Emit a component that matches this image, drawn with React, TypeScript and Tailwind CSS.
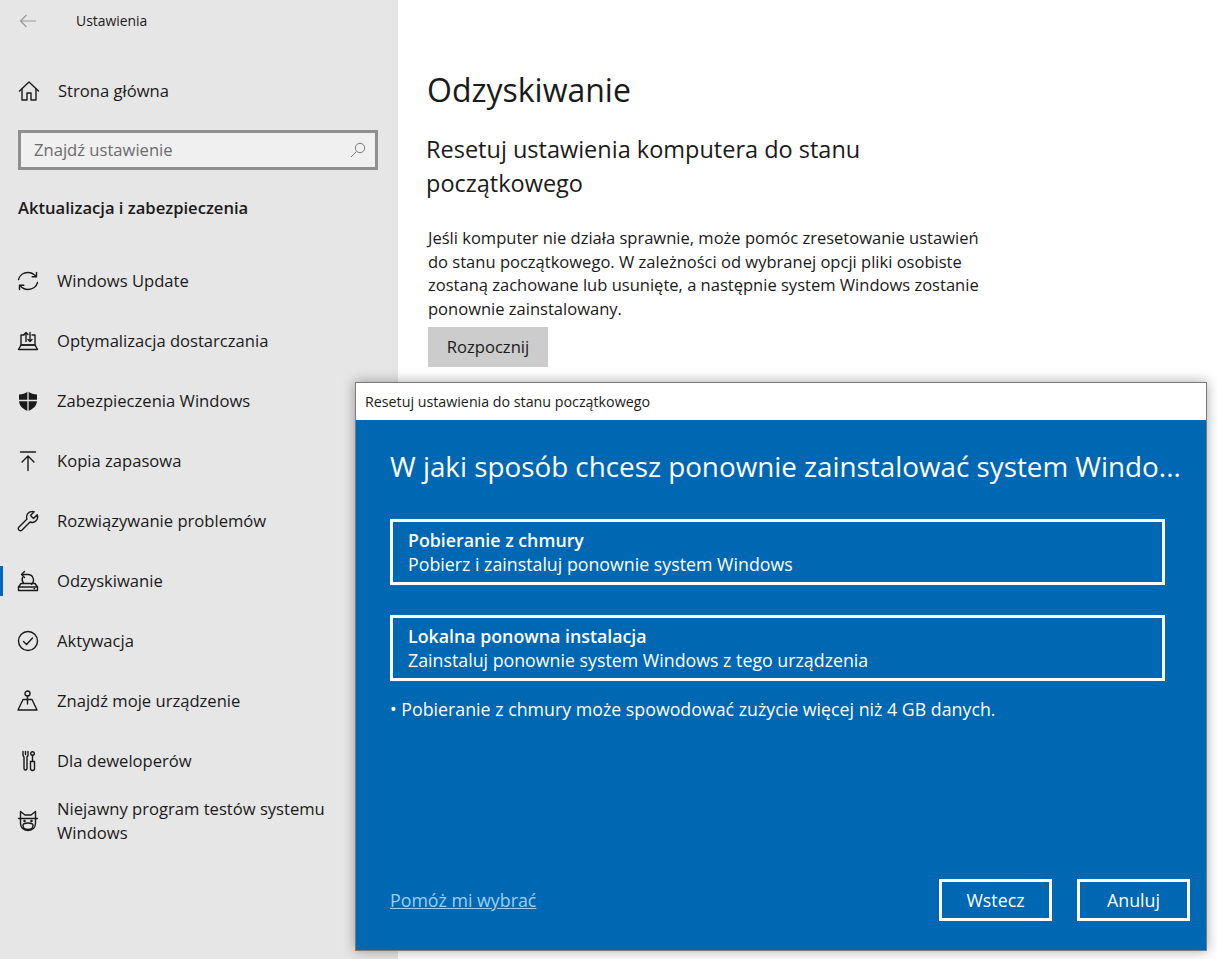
import type { ReactNode } from 'react'

const stroke = {
  fill: 'none',
  stroke: 'currentColor',
  strokeWidth: 1.4,
  strokeLinecap: 'round' as const,
  strokeLinejoin: 'round' as const,
}

function Icon({ children }: { children: ReactNode }) {
  return (
    <svg width="22" height="22" viewBox="0 0 22 22" className="shrink-0 text-[#1a1a1a]">
      {children}
    </svg>
  )
}

const icons: Record<string, ReactNode> = {
  home: (
    <g {...stroke}>
      <path d="M1.500 11 11 2l9.500 9" />
      <path d="M4 9v11h5v-7h4v7h5V9" />
    </g>
  ),
  update: (
    <g {...stroke}>
      <path d="M1.500 9.500C2.500 5.500 6.200 2.500 11 2.500c3.500 0 6 1.500 8 4" />
      <path d="M19.500 2.500v4.300h-4.300" />
      <path d="M20.500 12.500c-1 4-4.700 7-9.500 7-3.500 0-6-1.500-8-4" />
      <path d="M2.500 19.500v-4.300h4.300" />
    </g>
  ),
  delivery: (
    <g {...stroke}>
      <path d="M7 5H4v10h14V5h-3" />
      <path d="M1.500 19.500h19L18 15H4z" />
      <path d="M9 11.500V2.500M7 4.500l2-2 2 2" />
      <path d="M13 2.500v9M11 9.500l2 2 2-2" />
    </g>
  ),
  shield: (
    <g>
      <path d="M11 1.500c2.700 2 5.800 3 9 3v6c0 5-3.500 8.500-9 10.500-5.500-2-9-5.500-9-10.500v-6c3.200 0 6.300-1 9-3z" fill="currentColor" />
      <path d="M11 1v20M2 10.500h18" stroke="#e6e6e6" strokeWidth="1.300" />
    </g>
  ),
  backup: (
    <g {...stroke}>
      <path d="M3.500 2h15" />
      <path d="M11 20.500V6M5 12l6-6 6 6" />
    </g>
  ),
  wrench: (
    <g {...stroke}>
      <path d="M15 1.500a5.500 5.500 0 0 0-5 7.500L1.800 17.200a2 2 0 0 0 0 2.600l.4.400a2 2 0 0 0 2.600 0L13 12a5.500 5.500 0 0 0 7.200-7.200L16.500 8.500l-3-3 3.700-3.700A5.500 5.500 0 0 0 15 1.500z" />
    </g>
  ),
  recovery: (
    <g {...stroke}>
      <path d="M5 4.500h6a5.500 5.500 0 0 1 3.500 9.700" />
      <path d="M7.500 1.500 4.500 4.500l3 3" />
      <path d="M5.500 7.500A5.500 5.500 0 0 0 6.500 13" />
      <path d="M4 13.500h14l2.500 3.500v3.500h-19V17z" />
      <path d="M1.500 17h19M17 18.800h.5" />
    </g>
  ),
  activation: (
    <g {...stroke}>
      <circle cx="11" cy="11" r="9.500" />
      <path d="m6.500 11.500 3 3 6-6.500" />
    </g>
  ),
  find: (
    <g {...stroke}>
      <circle cx="10.500" cy="3.500" r="2.500" />
      <path d="M10.500 6V14" />
      <path d="M6 9.500h9l5 10.500H1z" />
    </g>
  ),
  dev: (
    <g {...stroke}>
      <path d="M6 1.500v4l1 1.500v11.500a1.500 1.500 0 0 0 3 0V7l1-1.500v-4" />
      <path d="M8.500 1.500v3" />
      <circle cx="15.500" cy="3.500" r="1.800" />
      <path d="M15.500 5.300V11M13.500 11.500h4v7a2 2 0 0 1-4 0z" />
    </g>
  ),
  insider: (
    <g {...stroke}>
      <path d="M3.500 1.500 8 5h6l4.500-3.500V13c0 4-2.500 7.500-7.500 7.500S3.500 17 3.500 13z" />
      <path d="M1.500 8.500h19" />
      <path d="M6 15.500c0-2 2-2.500 5-2.500s5 .5 5 2.500-1.500 4-5 4-5-2-5-4z" />
      <circle cx="7.500" cy="11" r="0.600" fill="currentColor" />
      <circle cx="14.500" cy="11" r="0.600" fill="currentColor" />
    </g>
  ),
}

type NavRow = { icon: string; label: string; active?: boolean }

const rows: NavRow[] = [
  { icon: 'update', label: 'Windows Update' },
  { icon: 'delivery', label: 'Optymalizacja dostarczania' },
  { icon: 'shield', label: 'Zabezpieczenia Windows' },
  { icon: 'backup', label: 'Kopia zapasowa' },
  { icon: 'wrench', label: 'Rozwiązywanie problemów' },
  { icon: 'recovery', label: 'Odzyskiwanie', active: true },
  { icon: 'activation', label: 'Aktywacja' },
  { icon: 'find', label: 'Znajdź moje urządzenie' },
  { icon: 'dev', label: 'Dla deweloperów' },
]

function SideRow({ row }: { row: NavRow }) {
  return (
    <div className="relative flex h-[60px] items-center gap-[18px] pl-[17px]">
      {row.active && <div className="absolute left-0 top-[15px] h-[30px] w-[3px] bg-[#0067c0]" />}
      <Icon>{icons[row.icon]}</Icon>
      <span>{row.label}</span>
    </div>
  )
}

function ChoiceCard({ title, text }: { title: string; text: string }) {
  return (
    <div className="flex h-[66px] flex-col justify-center border-[3px] border-white pl-[15px]">
      <div className="font-semibold leading-[24px]">{title}</div>
      <div className="leading-[24px]">{text}</div>
    </div>
  )
}

export default function App() {
  return (
    <div className="relative flex h-[959px] w-[1217px] overflow-hidden bg-white font-['Open_Sans','Liberation_Sans',sans-serif] text-[16.600px] text-[#1a1a1a]">
      <aside className="w-[398px] shrink-0 bg-[#e6e6e6]">
        <div className="flex h-[42px] items-center pl-[19px]">
          <svg width="18" height="14" viewBox="0 0 18 14" className="text-[#999999]">
            <path d="M17 7H1.500M7.500 1 1.500 7l6 6" fill="none" stroke="currentColor" strokeWidth="1.200" />
          </svg>
          <span className="ml-[39px] text-[13.900px]">Ustawienia</span>
        </div>
        <div className="mt-[19px] flex h-[60px] items-center gap-[18px] pl-[18px]">
          <Icon>{icons.home}</Icon>
          <span>Strona główna</span>
        </div>
        <div className="mx-[18px] mt-[9px] flex h-[40px] w-[360px] items-center justify-between border-[3px] border-[#8f8f8f] bg-[#f0f0f0] pl-[13px] pr-[9px] text-[#6b6b6b]">
          <span>Znajdź ustawienie</span>
          <svg width="16" height="16" viewBox="0 0 16 16" className="text-[#7a7a7a]">
            <circle cx="10" cy="6" r="4.700" fill="none" stroke="currentColor" />
            <path d="M6.500 9.500 1 15" stroke="currentColor" />
          </svg>
        </div>
        <div className="ml-[18px] mt-[26px] h-[24px] font-semibold leading-[24px]">Aktualizacja i zabezpieczenia</div>
        <div className="mt-[31px]">
          {rows.map(row => (
            <SideRow key={row.label} row={row} />
          ))}
          <div className="flex h-[60px] items-center gap-[18px] pl-[17px] leading-[24.500px]">
            <Icon>{icons.insider}</Icon>
            <span>
              Niejawny program testów systemu
              <br />
              Windows
            </span>
          </div>
        </div>
      </aside>

      <main className="pl-[29px] pt-[66px]">
        <h1 className="text-[32px] font-normal leading-[48px]">Odzyskiwanie</h1>
        <h2 className="mt-[18px] w-[480px] text-[23.500px] font-normal leading-[34px] ml-[-1px] whitespace-nowrap">
          Resetuj ustawienia komputera do stanu
          <br />
          początkowego
        </h2>
        <p className="ml-px mt-[26px] w-[600px] whitespace-nowrap text-[16.550px] leading-[23.500px]">
          Jeśli komputer nie działa sprawnie, może pomóc zresetowanie ustawień
          <br />
          do stanu początkowego. W zależności od wybranej opcji pliki osobiste
          <br />
          zostaną zachowane lub usunięte, a następnie system Windows zostanie
          <br />
          ponownie zainstalowany.
        </p>
        <button type="button" className="ml-px mt-[7px] h-[40px] w-[120px] bg-[#cccccc] text-[16.600px]">
          Rozpocznij
        </button>
      </main>

      <div className="absolute left-[355px] top-[382px] flex h-[569px] w-[852px] flex-col border border-[#7a7a7a] text-[17.800px] shadow-[0_0_12px_rgba(0,0,0,0.35)]">
        <div className="flex h-[37px] shrink-0 items-center bg-white pl-[9px] text-[14.250px]">
          Resetuj ustawienia do stanu początkowego
        </div>
        <div className="flex flex-1 flex-col bg-[#0067b3] pl-[34px] pr-[16px] text-white">
          <div className="mt-[24px] whitespace-nowrap text-[27.800px] leading-[44px]">
            W jaki sposób chcesz ponownie zainstalować system Windo...
          </div>
          <div className="mr-[25px] mt-[31px] flex flex-col gap-[30px]">
            <ChoiceCard title="Pobieranie z chmury" text="Pobierz i zainstaluj ponownie system Windows" />
            <ChoiceCard title="Lokalna ponowna instalacja" text="Zainstaluj ponownie system Windows z tego urządzenia" />
          </div>
          <div className="mt-[16px] leading-[24px]">• Pobieranie z chmury może spowodować zużycie więcej niż 4 GB danych.</div>
          <div className="mb-[29px] mt-auto flex items-center justify-between">
            <span className="text-[#9bd0f5] underline">Pomóż mi wybrać</span>
            <div className="flex gap-[25px]">
              <button type="button" className="h-[42px] w-[113px] border-[3px] border-white">Wstecz</button>
              <button type="button" className="h-[42px] w-[113px] border-[3px] border-white">Anuluj</button>
            </div>
          </div>
        </div>
      </div>
    </div>
  )
}
